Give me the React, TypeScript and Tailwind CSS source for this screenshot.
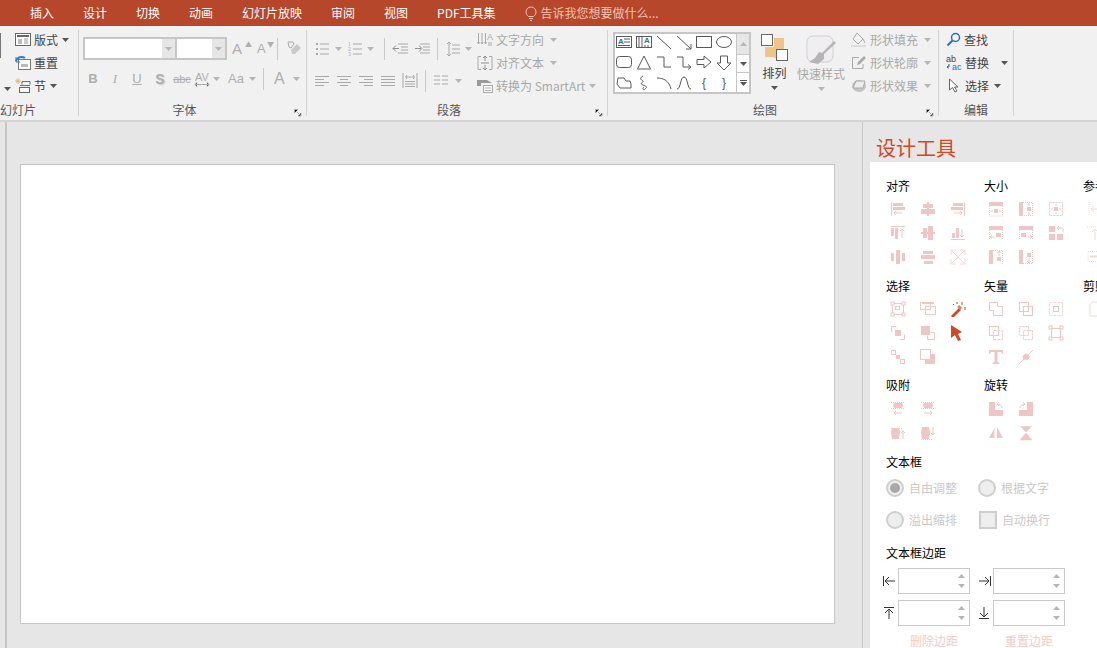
import type { ReactNode } from 'react';

const G = '#a9a9a9';
const P = '#eec6c6';
const R = '#d24726';
const D = '#5a5a5a';

function Ico({ w = 16, h = 16, children }: { w?: number; h?: number; children: ReactNode }) {
  return (
    <svg width={w} height={h} viewBox={`0 0 ${w} ${h}`} className="shrink-0 block" fill="none">
      {children}
    </svg>
  );
}

function Caret({ dark = false, className = '' }: { dark?: boolean; className?: string }) {
  return (
    <svg width="7" height="4" viewBox="0 0 7 4" className={`shrink-0 block ${className}`}>
      <path d="M0 0h7L3.5 4z" fill={dark ? '#555' : '#b5b5b5'} />
    </svg>
  );
}

function Sep() {
  return <div className="w-px h-[86px] mt-[2px] bg-[#d2d2d2] shrink-0" />;
}

function VSep({ h = 22, className = '' }: { h?: number; className?: string }) {
  return <div className={`w-px bg-[#c9c9c9] shrink-0 ${className}`} style={{ height: h }} />;
}

function Launcher() {
  return (
    <svg width="8" height="8" viewBox="0 0 8 8" className="absolute right-[4px] bottom-[1px]">
      <path d="M.5 4V.5H4M.5 .5" stroke="#a8a8a8" />
      <path d="M3 3l4 4M7 4v3H4" stroke="#a8a8a8" />
    </svg>
  );
}

function Group({ label, w, children, launcher, labelClass = 'text-center' }: { label: string; w: number; children: ReactNode; launcher?: boolean; labelClass?: string }) {
  return (
    <div className="flex flex-col h-[90px] shrink-0 relative" style={{ width: w }}>
      <div className="h-[74px] mb-[1px] overflow-hidden">{children}</div>
      <div className={`h-[16px] leading-[16px] text-[12px] text-[#555] ${launcher ? 'pr-[16px]' : ''} ${labelClass}`}>{label}</div>
      {launcher && <Launcher />}
    </div>
  );
}

function SmallRow({ icon, text, dim, caret, className = '' }: { icon: ReactNode; text: string; dim?: boolean; caret?: ReactNode; className?: string }) {
  return (
    <div className={`flex items-center h-[23.25px] ${className}`}>
      {icon}
      <span className={`ml-[3px] text-[12px] whitespace-nowrap ${dim ? 'text-[#a8a8a8]' : 'text-[#444]'}`}>{text}</span>
      {caret}
    </div>
  );
}

function Lines({ rows, x = 0, w = 14, c = G }: { rows: [number, number, number][]; x?: number; w?: number; c?: string }) {
  return (
    <Ico w={w} h={14}>
      {rows.map(([y, a, l], i) => (
        <rect key={i} x={x + a} y={y} width={l} height="1" fill={c} />
      ))}
    </Ico>
  );
}

const fontLetter = 'font-["Liberation_Sans",sans-serif] text-[#aeaeae]';

function FontGroup() {
  return (
    <Group label="字体" w={227} launcher>
      <div className="pt-[9px] pl-[4px]">
        <div className="flex items-center h-[23px]">
          <div className="w-[94px] h-[23px] border-2 border-[#c6c6c6] bg-white flex justify-end">
            <div className="w-[13px] bg-[#e6e6e6] flex items-center justify-center"><Caret /></div>
          </div>
          <div className="w-[50px] h-[23px] border-2 border-l-0 border-[#c6c6c6] bg-white flex justify-end">
            <div className="w-[13px] bg-[#e6e6e6] flex items-center justify-center"><Caret /></div>
          </div>
          <span className={`ml-[5px] w-[13px] text-[15px] leading-[23px] ${fontLetter}`}>A</span>
          <span className="w-[10px] -mt-[9px] text-[7px] text-[#aeaeae]">▲</span>
          <span className={`ml-[2px] w-[10px] text-[13px] leading-[23px] ${fontLetter}`}>A</span>
          <span className="w-[8px] -mt-[9px] text-[7px] text-[#aeaeae]">▼</span>
          <VSep h={22} className="ml-[2px]" />
          <div className="ml-[8px]">
            <Ico>
              <path d="M2 1h5l1 2-3 4-2-1z" stroke={G} />
              <path d="M5 9l6-6 4 4-6 6H6z" fill="#c9c9c9" />
            </Ico>
          </div>
        </div>
        <div className="flex items-center h-[22px] mt-[8px] -ml-px">
          <span className={`w-[22px] text-[13px] font-bold text-center ${fontLetter}`}>B</span>
          <span className={`w-[22px] text-[13px] italic text-center font-["Liberation_Serif",serif] text-[#aeaeae]`}>I</span>
          <span className={`w-[22px] text-[13px] underline text-center ${fontLetter}`}>U</span>
          <span className={`w-[24px] text-[14px] font-bold text-center [text-shadow:1px_1px_1px_#ccc] ${fontLetter}`}>S</span>
          <span className={`w-[20px] text-[11px] line-through text-center ${fontLetter}`}>abc</span>
          <div className="ml-px flex items-center w-[31px]">
            <div className="flex flex-col items-center w-[18px]">
              <span className={`text-[11px] leading-[10px] ${fontLetter}`}>AV</span>
              <svg width="16" height="5" viewBox="0 0 16 5"><path d="M1 2.5h14M3 .5l-2 2 2 2M13 .5l2 2-2 2" stroke={G} /></svg>
            </div>
            <Caret className="ml-[2px]" />
          </div>
          <div className="ml-[4px] flex items-center w-[35px]">
            <span className={`text-[13px] ${fontLetter}`}>Aa</span>
            <Caret className="ml-[5px]" />
          </div>
          <VSep h={22} />
          <span className={`ml-[10px] text-[16px] ${fontLetter}`}>A</span>
          <Caret className="ml-[8px]" />
        </div>
      </div>
    </Group>
  );
}

function ParagraphGroup() {
  const dots = (
    <Ico>
      <rect x="1" y="2" width="2" height="2" fill={G} /><rect x="1" y="7" width="2" height="2" fill={G} /><rect x="1" y="12" width="2" height="2" fill={G} />
      <path d="M5 3h9M5 8h9M5 13h9" stroke={G} />
    </Ico>
  );
  const nums = (
    <Ico w={14}>
      <path d="M5 3h9M5 8h9M5 13h9" stroke={G} />
      <text x="0" y="5" fontSize="5" fill={G}>1</text><text x="0" y="10" fontSize="5" fill={G}>2</text><text x="0" y="15" fontSize="5" fill={G}>3</text>
    </Ico>
  );
  return (
    <Group label="段落" w={300} launcher>
      <div className="flex pl-[8px]">
        <div className="w-[162px] pt-[10px]">
          <div className="flex items-center h-[22px]">
            {dots}<Caret className="ml-[4px]" />
            <div className="ml-[6px]">{nums}</div><Caret className="ml-[5px]" />
            <VSep className="ml-[10px]" />
            <div className="ml-[7px]"><Ico><path d="M6 3h10M9 6h7M9 9h7M6 12h10" stroke={G} /><path d="M1 7.5h6M4 4.5l-3 3 3 3" stroke="#8f8f8f" /></Ico></div>
            <div className="ml-[6px]"><Ico><path d="M6 3h10M9 6h7M9 9h7M6 12h10" stroke={G} /><path d="M1 7.5h6M5 4.5l3 3-3 3" stroke="#8f8f8f" /></Ico></div>
            <VSep className="ml-[7px]" />
            <div className="ml-[8px]"><Ico w={14}><path d="M6 4h8M6 8h8M6 12h8M3 1v14M1 3l2-2 2 2M1 13l2 2 2-2" stroke={G} /></Ico></div>
            <Caret className="ml-[5px]" />
          </div>
          <div className="flex items-center h-[22px] mt-[10px]">
            <Lines rows={[[2, 0, 14], [5, 0, 9], [8, 0, 14], [11, 0, 9]]} />
            <div className="ml-[8px]"><Lines rows={[[2, 0, 14], [5, 3, 8], [8, 0, 14], [11, 3, 8]]} /></div>
            <div className="ml-[8px]"><Lines rows={[[2, 0, 14], [5, 5, 9], [8, 0, 14], [11, 5, 9]]} /></div>
            <div className="ml-[8px]"><Lines rows={[[2, 0, 14], [5, 0, 14], [8, 0, 14], [11, 0, 14]]} /></div>
            <div className="ml-[7px]"><Ico><path d="M1 0v15M15 0v15M3 11h10M3 13.5h10M3 8.5h10M4 4h8M5 2L3.5 4 5 6M11 2l1.500 2L11 6" stroke={G} /></Ico></div>
            <VSep className="ml-[7px]" />
            <div className="ml-[8px]"><Ico w={14}><path d="M0 3h6M8 3h6M0 7h6M8 7h6M0 11h6M8 11h6" stroke={G} /></Ico></div>
            <Caret className="ml-[7px]" />
          </div>
        </div>
        <div>
          <SmallRow
            icon={<Ico><path d="M1.500 1v11M5 1v11M8.500 1v11M.5 10l1 2 1-2M4 10l1 2 1-2M7.500 10l1 2 1-2" stroke={G} /><text x="10" y="8" fontSize="9" fill={G} fontFamily="Liberation Sans">A</text><path d="M12 10v4M14 10v4" stroke={G} /></Ico>}
            text="文字方向"
            dim
            caret={<Caret className="ml-[6px]" />}
          />
          <SmallRow
            icon={<Ico><path d="M4 1.500H1v13h3M12 1.500h3v13h-3" stroke={G} /><path d="M8 1v5M6 3l2-2 2 2M8 15v-5M6 13l2 2 2-2M4 8h8" stroke="#8f8f8f" /></Ico>}
            text="对齐文本"
            dim
            caret={<Caret className="ml-[6px]" />}
          />
          <SmallRow
            icon={<Ico><path d="M0 2h10l5 3H4v3H0z" fill="#9a9a9a" /><rect x="6.500" y="7.500" width="9" height="7" fill="#fff" stroke={G} /><path d="M8 10h6M8 12.500h6" stroke={G} /></Ico>}
            text="转换为 SmartArt"
            dim
            caret={<Caret className="ml-[4px]" />}
          />
        </div>
      </div>
    </Group>
  );
}

const shapes: ReactNode[] = [
  <><rect x=".5" y="1.500" width="15" height="11" fill="#fff" stroke={D} /><text x="2" y="9" fontSize="8" fill="#2b6fb5" fontFamily="Liberation Sans" fontWeight="700">A</text><path d="M8 4h6M8 7h6M2 10.500h12" stroke={D} /></>,
  <><rect x=".5" y="1.500" width="15" height="11" fill="#fff" stroke={D} /><path d="M3 2v10M6 2v10" stroke={D} /><text x="8" y="8" fontSize="8" fill="#2b6fb5" fontFamily="Liberation Sans" fontWeight="700">A</text><path d="M9 10v2M12 10v2" stroke={D} /></>,
  <path d="M1 1l14 13" stroke={D} />,
  <path d="M1 1l14 13M15 9v5h-5" stroke={D} />,
  <rect x=".5" y="1.500" width="15" height="11" stroke={D} />,
  <ellipse cx="8" cy="7" rx="7.500" ry="5.500" stroke={D} />,
  <rect x=".5" y="1.500" width="15" height="11" rx="3" stroke={D} />,
  <path d="M8 1l6.500 13h-13z" stroke={D} />,
  <path d="M1 2h7v10h7" stroke={D} />,
  <path d="M1 2h6v10h7M12 9.500l3 2.500-3 2.500" stroke={D} />,
  <path d="M1 4.500h7V1l7 6-7 6V9.500H1z" stroke={D} />,
  <path d="M4.500 1h7v7H15l-7 7-7-7h3.500z" stroke={D} />,
  <path d="M2 3h6l2 3h4l1 3v4H4L1 9z" stroke={D} />,
  <path d="M7 1c-4 2-2 4 0 5s-5 2 0 4 4 2 2 4-3-1-1-2" stroke={D} />,
  <path d="M1 3c7 0 12 3 14 11" stroke={D} />,
  <path d="M1 14C5 14 4 2 8 2s3 12 7 12" stroke={D} />,
  <text x="8" y="12" fontSize="12" fill={D} textAnchor="middle" fontFamily="Liberation Sans">{'{'}</text>,
  <text x="8" y="12" fontSize="12" fill={D} textAnchor="middle" fontFamily="Liberation Sans">{'}'}</text>,
];

function DrawGroup() {
  return (
    <Group label="绘图" w={330} launcher>
      <div className="flex pl-[5px] pt-[4px]">
        <div className="flex w-[138px] h-[62px] border-2 border-[#c6c6c6] bg-white">
          <div className="grid grid-cols-[repeat(6,20px)] grid-rows-[repeat(3,20px)] w-[122px] -mt-px -ml-px mr-px">
            {shapes.map((s, i) => (
              <div key={i} className="flex items-center justify-center">
                <Ico>{s}</Ico>
              </div>
            ))}
          </div>
          <div className="flex flex-col w-[13px] border-l border-[#c6c6c6]">
            <div className="h-[20px] bg-[#e6e6e6] flex items-center justify-center"><Caret className="rotate-180" /></div>
            <div className="h-[19px] border-y border-[#c6c6c6] flex items-center justify-center"><Caret dark /></div>
            <div className="flex-1 flex flex-col items-center justify-center gap-px"><div className="w-[7px] h-px bg-[#555]" /><Caret dark /></div>
          </div>
        </div>
        <div className="ml-[10px] w-[27px] flex flex-col items-center">
          <svg width="28" height="28" viewBox="0 0 28 28" className="block shrink-0 mt-[2px]">
            <rect x="13" y="4" width="10" height="20" fill="#edc58a" />
            <rect x="4" y="13" width="19" height="10" fill="#edc58a" />
            <rect x=".5" y=".5" width="11" height="11" fill="#fff" stroke="#666" />
            <rect x="15.500" y="15.500" width="11" height="11" fill="#fff" stroke="#666" />
          </svg>
          <span className="text-[12px] leading-[16px] mt-[3px] text-[#444] whitespace-nowrap">排列</span>
          <Caret dark className="mt-[5px]" />
        </div>
        <div className="ml-[9px] w-[48px] flex flex-col items-center">
          <svg width="30" height="30" viewBox="0 0 30 30" className="block shrink-0 mt-[3px]">
            <rect x="1" y="1" width="26" height="26" rx="6" fill="#f1eef2" stroke="#cfcfcf" />
            <path d="M28 6L16 18l-3-1-4 6-6 4 9 2 6-5v-5L30 8z" fill="#b5b5b5" />
          </svg>
          <span className="text-[12px] leading-[16px] mt-px text-[#a8a8a8] whitespace-nowrap">快速样式</span>
          <Caret className="mt-[5px]" />
        </div>
        <div className="ml-[6px] -mt-[4px]">
          <SmallRow
            icon={<Ico><path d="M6 1l6 6-5 5-5-5z" stroke={G} /><path d="M0 13h15v2H0z" fill="#dcdcdc" /><path d="M12 7l2 4" stroke={G} /></Ico>}
            text="形状填充"
            dim
            caret={<Caret className="ml-[6px]" />}
          />
          <SmallRow
            icon={<Ico><path d="M8 2.500H1.500v11H12V9" stroke={G} /><path d="M6 10l1-3 6-6 2 2-6 6z" fill={G} /></Ico>}
            text="形状轮廓"
            dim
            caret={<Caret className="ml-[6px]" />}
          />
          <SmallRow
            icon={<Ico><ellipse cx="8" cy="8" rx="7" ry="6" fill="#c4c4c4" /><path d="M5 3h9l-2 7H2z" fill="#ededed" stroke={G} /></Ico>}
            text="形状效果"
            dim
            caret={<Caret className="ml-[6px]" />}
          />
        </div>
      </div>
    </Group>
  );
}

function EditGroup() {
  return (
    <Group label="编辑" w={74}>
      <div className="pl-[7px]">
        <SmallRow
          icon={<Ico w={15}><circle cx="9.500" cy="5.500" r="4" stroke="#2b6fb5" strokeWidth="1.500" /><path d="M6.500 8.500L1.500 13.500" stroke="#2b6fb5" strokeWidth="2" /></Ico>}
          text="查找"
        />
        <SmallRow
          icon={<Ico><text x="0" y="7" fontSize="9" fill="#444" fontFamily="Liberation Sans">ab</text><text x="6" y="15" fontSize="9" fill="#2b6fb5" fontFamily="Liberation Sans">ac</text><path d="M3 9v3H1M1 12l1.500-1.500M1 12l1.500 1.500" stroke="#2b6fb5" /></Ico>}
          text="替换"
          caret={<Caret dark className="ml-[12px]" />}
        />
        <SmallRow
          icon={<Ico><path d="M3.500 1v11l3-2.500L9 14l2-1-2.500-4H12z" fill="#fff" stroke="#666" /></Ico>}
          text="选择"
          caret={<Caret dark className="ml-[5px]" />}
        />
      </div>
    </Group>
  );
}

function SlideGroup() {
  return (
    <Group label="幻灯片" w={78} labelClass="text-left">
      <div className="flex h-full">
        <div className="w-[15px] shrink-0 relative">
          <div className="w-px h-[25px] mt-[5px] bg-[#777]" />
          <Caret dark className="absolute left-[4px] top-[59px]" />
        </div>
        <div>
          <SmallRow
            icon={<Ico><rect x=".5" y="1.500" width="15" height="12" fill="#fff" stroke="#666" /><path d="M2 4h12" stroke="#666" strokeWidth="2" /><rect x="3" y="7" width="4" height="5" fill="#bbb" /><path d="M9 7h4M9 9h4M9 11h4" stroke="#999" /></Ico>}
            text="版式"
            caret={<Caret dark className="ml-[4px]" />}
          />
          <SmallRow
            icon={<Ico><rect x="3.500" y="4.500" width="12" height="10" fill="#fff" stroke="#777" /><path d="M1 6c1-4 6-5 9-3" stroke="#2b7cd3" strokeWidth="2" /><path d="M1 2v5h4" stroke="#2b7cd3" /><rect x="6" y="9" width="7" height="3" fill="#bbb" /></Ico>}
            text="重置"
          />
          <SmallRow
            icon={<Ico><circle cx="3" cy="3" r="1.500" fill="#edb36a" /><path d="M3 0v6M0 3h6M1 1l4 4M5 1L1 5" stroke="#edb36a" strokeWidth=".7" /><path d="M7 3.500h8" stroke="#d24726" /><path d="M7 3.500v3M15 3.500v3" stroke="#666" /><rect x="4.500" y="9.500" width="10" height="5" fill="#fff" stroke="#666" /><path d="M5 7.500h10" stroke="#d24726" /></Ico>}
            text="节"
            caret={<Caret dark className="ml-[4px]" />}
          />
        </div>
      </div>
    </Group>
  );
}

const pinkIcons: Record<string, ReactNode> = {
  alignL: <><rect x="1" y="1" width="1" height="14" fill={P} /><rect x="3" y="2" width="10" height="3" fill={P} /><rect x="3" y="6" width="12" height="3" fill={P} /><path d="M4 12h8M6 10l-2 2 2 2" stroke={P} /></>,
  alignC: <><rect x="7" y="1" width="2" height="14" fill={P} /><rect x="3" y="3" width="10" height="4" fill={P} /><rect x="1" y="8" width="14" height="5" fill={P} /></>,
  alignR: <><rect x="14" y="1" width="1" height="14" fill={P} /><rect x="3" y="2" width="10" height="3" fill={P} /><rect x="1" y="6" width="12" height="3" fill={P} /><path d="M4 12h8M10 10l2 2-2 2" stroke={P} /></>,
  alignT: <><rect x="1" y="1" width="14" height="1" fill={P} /><rect x="1" y="3" width="3" height="8" fill={P} /><rect x="5" y="3" width="3" height="11" fill={P} /><path d="M12 4v9M10 6l2-2 2 2" stroke={P} /></>,
  alignM: <><rect x="1" y="7" width="14" height="2" fill={P} /><rect x="3" y="3" width="4" height="10" fill={P} /><rect x="8" y="1" width="5" height="14" fill={P} /></>,
  alignB: <><rect x="1" y="14" width="14" height="1" fill={P} /><rect x="2" y="8" width="3" height="5" fill={P} /><rect x="6" y="3" width="3" height="10" fill={P} /><path d="M12 4v8M10 10l2 2 2-2" stroke={P} /></>,
  distH: <><rect x="1" y="4" width="3" height="8" fill={P} /><rect x="6" y="1" width="4" height="14" fill={P} /><rect x="12" y="4" width="3" height="8" fill={P} /></>,
  distV: <><rect x="3" y="2" width="10" height="3" fill={P} /><rect x="1" y="6" width="14" height="4" fill={P} /><rect x="4" y="12" width="9" height="3" fill={P} /></>,
  expand: <path d="M1 1h5M1 1v5M15 1h-5M15 1v5M1 15h5M1 15v-5M15 15h-5M15 15v-5M2 2l12 12M14 2L2 14" stroke="#f3d8d8" />,
  sizeA: <><rect x="1" y="1" width="14" height="4" fill={P} /><path d="M1.500 5v10h13V5" stroke={P} strokeDasharray="1 1" /><rect x="6" y="8" width="4" height="4" fill={P} /><path d="M2 10h3M14 10h-3" stroke={P} /></>,
  sizeB: <><rect x="1" y="1" width="4" height="14" fill={P} /><path d="M5 1.500h9.500v13H5" stroke={P} strokeDasharray="1 1" /><rect x="9" y="6" width="4" height="4" fill={P} /><path d="M11 2v3M11 11v3" stroke={P} /></>,
  sizeC: <><path d="M1.500 1.500h13v13h-13z" stroke={P} strokeDasharray="2 1" /><rect x="6" y="6" width="4" height="4" fill={P} /><path d="M8 3v2M8 11v2M3 8h2M11 8h2" stroke={P} /></>,
  sizeD: <><rect x="1" y="1" width="14" height="4" fill={P} /><path d="M1.500 5v10M14.500 5v10" stroke={P} strokeDasharray="1 1" /><rect x="8" y="8" width="5" height="4" fill={P} /><path d="M2 12h4M4 10l-2 2 2 2" stroke={P} /></>,
  sizeE: <><rect x="1" y="1" width="14" height="4" fill={P} /><path d="M1.500 5v10M14.500 5v10" stroke={P} strokeDasharray="1 1" /><rect x="3" y="8" width="5" height="4" fill={P} /><path d="M10 12h4M12 10l2 2-2 2" stroke={P} /></>,
  swap: <><rect x="1" y="1" width="6" height="6" fill={P} /><rect x="1" y="9" width="6" height="6" fill={P} /><rect x="9" y="9" width="6" height="6" fill={P} /><path d="M9 3h6v4M11 1L9 3l2 2" stroke={P} /></>,
  sizeF: <><rect x="1" y="1" width="4" height="14" fill={P} /><path d="M5 1.500h9.500V15" stroke={P} strokeDasharray="1 1" /><rect x="9" y="8" width="4" height="4" fill={P} /><path d="M11 2v5M9 4l2-2 2 2" stroke={P} /></>,
  sizeG: <><rect x="1" y="1" width="4" height="14" fill={P} /><path d="M5 14.500h9.500V1" stroke={P} strokeDasharray="1 1" /><rect x="9" y="4" width="4" height="4" fill={P} /><path d="M11 9v5M9 12l2 2 2-2" stroke={P} /></>,
  selBox: <><rect x="2.500" y="2.500" width="11" height="11" stroke={P} /><rect x="1" y="1" width="3" height="3" fill="#fff" stroke={P} /><rect x="12" y="1" width="3" height="3" fill="#fff" stroke={P} /><rect x="1" y="12" width="3" height="3" fill="#fff" stroke={P} /><rect x="12" y="12" width="3" height="3" fill="#fff" stroke={P} /><rect x="5.500" y="5.500" width="4" height="3" stroke={P} /></>,
  selOverlap: <><rect x=".5" y="1.500" width="10" height="7" stroke={P} /><rect x="5.500" y="5.500" width="10" height="8" stroke={P} /><rect x="2" y="1" width="12" height="2" fill={P} /></>,
  wand: <><path d="M1 15l8-8 2 2-8 8z" fill={R} /><rect x="8" y="5" width="4" height="3" fill="#d6826a" transform="rotate(45 10 6)" /><path d="M12 1v3M3 3l1 1M15 6v3M7 1v2" stroke={R} /></>,
  selA: <><path d="M1.500 1.500h5M1.500 1.500v5" stroke={P} /><path d="M9.500 14.500h5v-5" stroke={P} /><rect x="5" y="5" width="6" height="6" fill={P} /></>,
  selB: <><rect x="1" y="1" width="9" height="9" fill={P} /><path d="M10.500 7.500h4v7h-7v-4" stroke={P} /></>,
  cursor: <path d="M1 0l11 7-4 2 3 6-3 1-3-6-4 3z" fill={R} />,
  selC: <><rect x="1.500" y="1.500" width="4" height="4" stroke={P} /><rect x="6" y="6" width="4" height="4" fill={P} /><rect x="10.500" y="10.500" width="4" height="4" stroke={P} /></>,
  selD: <><rect x=".5" y=".5" width="10" height="10" stroke={P} /><path d="M15 5v10H5v-4h6V5z" fill={P} /></>,
  vecA: <path d="M1.500 1.500h8v4h5v9h-9v-5h-4z" stroke={P} />,
  vecB: <><rect x="1.500" y="1.500" width="9" height="9" stroke={P} /><rect x="5.500" y="5.500" width="9" height="9" stroke={P} /></>,
  vecC: <><rect x="1.500" y="1.500" width="13" height="13" stroke="#f3d8d8" strokeDasharray="3 1" /><rect x="5.500" y="5.500" width="5" height="5" stroke={P} /></>,
  vecD: <><rect x="1.500" y="1.500" width="9" height="9" stroke={P} /><rect x="5.500" y="5.500" width="9" height="9" stroke={P} strokeDasharray="3 1" /></>,
  vecE: <><rect x="1.500" y="1.500" width="9" height="9" stroke={P} strokeDasharray="2 1" /><rect x="5.500" y="5.500" width="9" height="9" stroke={P} strokeDasharray="2 1" /></>,
  vecF: <><rect x="3.500" y="3.500" width="9" height="9" stroke={P} /><rect x="1" y="1" width="3" height="3" stroke={P} /><rect x="12" y="1" width="3" height="3" stroke={P} /><rect x="1" y="12" width="3" height="3" stroke={P} /><rect x="12" y="12" width="3" height="3" stroke={P} /></>,
  glyphT: <path d="M1 1h14v4h-1l-1-2H9.500v10l2 1v1h-7v-1l2-1V3H3L2 5H1z" fill={P} />,
  pen: <><path d="M1 15L15 1" stroke={P} /><rect x="5" y="5" width="6" height="6" rx="2" fill={P} transform="rotate(45 8 8)" /></>,
  snapA: <><path d="M1 1.500h14M1 7.500h14" stroke={P} strokeDasharray="1 1" /><path d="M4 2h8l1 2-1 3H4L3 4z" fill={P} /><path d="M4 12h8M6 10l-2 2 2 2" stroke={P} /></>,
  snapB: <><path d="M1 1.500h14M1 7.500h14" stroke={P} strokeDasharray="1 1" /><path d="M4 2h8l1 2-1 3H4L3 4z" fill={P} /><path d="M4 12h8M10 10l2 2-2 2" stroke={P} /></>,
  snapC: <><path d="M1 3.500h11" stroke={P} strokeDasharray="1 1" /><path d="M2 3h7l1 4-1 7H2L1 7z" fill={P} /><path d="M13 6v8M11 8l2-2 2 2" stroke={P} /></>,
  snapD: <><path d="M1 14.500h11" stroke={P} strokeDasharray="1 1" /><path d="M2 2h7l1 5-1 7H2L1 7z" fill={P} /><path d="M13 2v8M11 8l2 2 2-2" stroke={P} /></>,
  rotA: <><path d="M1 1h6v14H1zM7 9h8v6H7z" fill={P} /><path d="M9 3c3 0 5 2 5 4M11 1L9 3l2 2" stroke={P} /></>,
  rotB: <><path d="M9 1h6v14H9zM1 9h8v6H1z" fill={P} /><path d="M7 3C4 3 2 5 2 7M5 1l2 2-2 2" stroke={P} /></>,
  flipH: <path d="M6.500 3v10H1zM9 2l6 11H9z" fill={P} />,
  flipV: <path d="M2.500 1.500h11L8 7z M8 8l6 7H2z" fill={P} stroke={P} strokeWidth=".5" />,
  ghostL: <><path d="M2 1v14" stroke="#f3d8d8" strokeDasharray="1 1" /><path d="M4 8h10M7 5L4 8l3 3" stroke="#f3d8d8" /></>,
  ghostU: <><path d="M0 2h16" stroke="#f3d8d8" strokeDasharray="1 1" /><path d="M8 4v11M5 7l3-3 3 3" stroke="#f3d8d8" /></>,
  ghostM: <><rect x="1" y="2.500" width="14" height="10" stroke="#f3d8d8" strokeDasharray="1 1" /><path d="M3 7.500h10" stroke="#f3d8d8" strokeWidth="2" /></>,
  ghostC: <><path d="M5 1h7v14H3V4z" stroke="#f3d8d8" /></>,
};

function IconCol({ title, rows, w = 99, gridClass = 'mt-[3px]' }: { title: string; rows: string[]; w?: number; gridClass?: string }) {
  return (
    <div className="shrink-0" style={{ width: w }}>
      <div className="text-[12px] leading-[16px] text-black whitespace-nowrap">{title}</div>
      <div className={`grid grid-cols-[repeat(3,30px)] auto-rows-[24px] -ml-[3px] ${gridClass}`}>
        {rows.map((k, i) => (
          <div key={i} className="flex items-center justify-center">
            {k && <Ico>{pinkIcons[k]}</Ico>}
          </div>
        ))}
      </div>
    </div>
  );
}

function Radio({ on, label, className = '' }: { on?: boolean; label: string; className?: string }) {
  return (
    <div className={`flex items-center ${className}`}>
      <div className="w-[18px] h-[18px] rounded-full border-2 border-[#cfcfcf] bg-[#eeeeee] flex items-center justify-center">
        {on && <div className="w-[10px] h-[10px] rounded-full bg-[#a9a9a9]" />}
      </div>
      <span className="ml-[5px] text-[12px] text-[#cdc7c7]">{label}</span>
    </div>
  );
}

function Spin({ arrow }: { arrow: ReactNode }) {
  return (
    <div className="flex items-center w-[87px] shrink-0">
      <div className="w-[15px] shrink-0">{arrow}</div>
      <div className="w-[72px] h-[26px] border border-[#c9c9c9] bg-white flex flex-col items-end justify-center gap-[6px] pr-[4px]">
        <Caret className="rotate-180" />
        <Caret />
      </div>
    </div>
  );
}

function DesignPanel() {
  return (
    <div className="flex-1 min-w-0 border-l border-[#c6c6c6] pl-[7px] overflow-hidden relative">
      <div className="h-[40px] pt-[12px] pl-[6px] text-[20px] leading-[28px] text-[#d24726]">设计工具</div>
      <div className="bg-white h-[486px] pl-[16px] pt-[16px]">
        <div className="flex w-[300px]">
          <IconCol w={98} title="对齐" rows={['alignL', 'alignC', 'alignR', 'alignT', 'alignM', 'alignB', 'distH', 'distV', 'expand']} />
          <IconCol title="大小" rows={['sizeA', 'sizeB', 'sizeC', 'sizeD', 'sizeE', 'swap', 'sizeF', 'sizeG', '']} />
          <IconCol title="参考" rows={['ghostL', '', '', 'ghostU', '', '', 'ghostM', '', '']} />
        </div>
        <div className="flex w-[300px] mt-[9px]">
          <IconCol w={98} title="选择" rows={['selBox', 'selOverlap', 'wand', 'selA', 'selB', 'cursor', 'selC', 'selD', '']} />
          <IconCol title="矢量" rows={['vecA', 'vecB', 'vecC', 'vecD', 'vecE', 'vecF', 'glyphT', 'pen', '']} />
          <IconCol title="剪贴" rows={['ghostC', '', '']} />
        </div>
        <div className="flex w-[300px] mt-[8px]">
          <IconCol w={98} gridClass="mt-[4px]" title="吸附" rows={['snapA', 'snapB', '', 'snapC', 'snapD', '']} />
          <IconCol gridClass="mt-[4px]" title="旋转" rows={['rotA', 'rotB', '', 'flipH', 'flipV', '']} />
        </div>
        <div className="text-[12px] leading-[16px] text-black mt-[9px]">文本框</div>
        <div className="flex items-center h-[18px] mt-[9px]">
          <Radio on label="自由调整" className="w-[92px]" />
          <Radio label="根据文字" />
        </div>
        <div className="flex items-center h-[18px] mt-[14px]">
          <Radio label="溢出缩排" className="w-[93px]" />
          <div className="w-[18px] h-[18px] border-2 border-[#cfcfcf] bg-[#eeeeee]" />
          <span className="ml-[5px] text-[12px] text-[#cdc7c7]">自动换行</span>
        </div>
        <div className="text-[12px] leading-[16px] text-black mt-[16px]">文本框边距</div>
        <div className="-ml-[3px] mt-[7px] flex flex-col gap-[6px]">
          <div className="flex gap-[8px]">
            <Spin arrow={<Ico w={13} h={12}><path d="M.5 1v10M12 6H2M6 2L2 6l4 4" stroke="#333" /></Ico>} />
            <Spin arrow={<Ico w={13} h={12}><path d="M12.500 1v10M1 6h10M7 2l4 4-4 4" stroke="#333" /></Ico>} />
          </div>
          <div className="flex gap-[8px]">
            <Spin arrow={<Ico w={13} h={12}><path d="M1 .5h10M6 12V2M2 6l4-4 4 4" stroke="#333" /></Ico>} />
            <Spin arrow={<Ico w={13} h={12}><path d="M1 11.500h10M6 0v10M2 6l4 4 4-4" stroke="#333" /></Ico>} />
          </div>
        </div>
        <div className="flex text-[12px] leading-[16px] text-[#f0cbc4] mt-[7px]">
          <span className="ml-[24px] w-[95px]">删除边距</span>
          <span>重置边距</span>
        </div>
      </div>
    </div>
  );
}

export default function App() {
  const tabs = ['插入', '设计', '切换', '动画', '幻灯片放映', '审阅', '视图', 'PDF工具集'];
  return (
    <div className='w-[1097px] h-[648px] overflow-hidden flex flex-col bg-[#e6e6e6] font-["Noto_Sans_CJK_SC","Liberation_Sans",sans-serif]'>
      <div className="h-[26px] shrink-0 bg-[#b7472a] flex items-center pl-[30px] gap-[29px] text-[12px] text-white">
        {tabs.map((t) => (
          <span key={t} className="whitespace-nowrap">{t}</span>
        ))}
        <div className="flex items-center text-[#f0c4b4]">
          <svg width="12" height="15" viewBox="0 0 12 15" className="block">
            <path d="M3.500 10.500C2 9 1 8 1 6a5 5 0 0 1 10 0c0 2-1 3-2.500 4.500zM4 12.500h4M5 14.500h2" stroke="#f0c4b4" fill="none" />
          </svg>
          <span className="ml-[4px] whitespace-nowrap">告诉我您想要做什么...</span>
        </div>
      </div>
      <div className="h-[96px] shrink-0 bg-[#f1f1f1] border-b-2 border-[#d4d4d4] flex pt-[2px]">
        <SlideGroup />
        <Sep />
        <FontGroup />
        <Sep />
        <ParagraphGroup />
        <Sep />
        <DrawGroup />
        <Sep />
        <EditGroup />
        <Sep />
      </div>
      <div className="flex-1 flex min-h-0">
        <div className="w-[7px] shrink-0 border-r-2 border-[#c6c6c6]" />
        <div className="w-[855px] shrink-0 pl-[13px] pt-[42px]">
          <div className="w-[815px] h-[460px] bg-white border border-[#c6c6c6]" />
        </div>
        <DesignPanel />
      </div>
    </div>
  );
}
